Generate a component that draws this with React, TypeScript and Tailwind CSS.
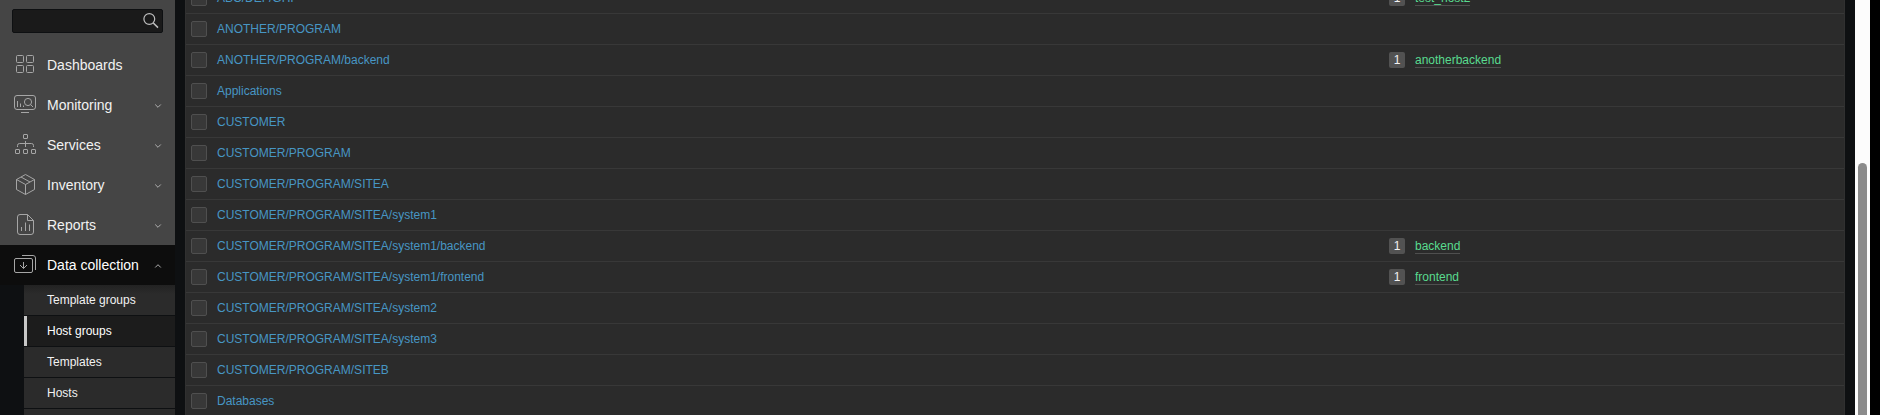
import React from "react";

type Row = { name: string; host?: string };

const rows: Row[] = [
  { name: "ABC/DEF/GHI", host: "test_host2" },
  { name: "ANOTHER/PROGRAM" },
  { name: "ANOTHER/PROGRAM/backend", host: "anotherbackend" },
  { name: "Applications" },
  { name: "CUSTOMER" },
  { name: "CUSTOMER/PROGRAM" },
  { name: "CUSTOMER/PROGRAM/SITEA" },
  { name: "CUSTOMER/PROGRAM/SITEA/system1" },
  { name: "CUSTOMER/PROGRAM/SITEA/system1/backend", host: "backend" },
  { name: "CUSTOMER/PROGRAM/SITEA/system1/frontend", host: "frontend" },
  { name: "CUSTOMER/PROGRAM/SITEA/system2" },
  { name: "CUSTOMER/PROGRAM/SITEA/system3" },
  { name: "CUSTOMER/PROGRAM/SITEB" },
  { name: "Databases" },
];

function Icon({ children }: { children: React.ReactNode }) {
  return (
    <svg width="24" height="24" viewBox="0 0 24 24" fill="none" stroke="#a6a6a6" strokeWidth="1" className="shrink-0">
      {children}
    </svg>
  );
}

const icons = {
  dashboards: (
    <Icon>
      <rect x="3.5" y="2.5" width="7" height="7" rx="1" />
      <rect x="13.5" y="2.5" width="7" height="7" rx="1" />
      <rect x="3.5" y="12.5" width="7" height="7" rx="1" />
      <rect x="13.5" y="12.5" width="7" height="7" rx="1" />
    </Icon>
  ),
  monitoring: (
    <Icon>
      <rect x="1.5" y="2.5" width="21" height="14" rx="2.5" />
      <path d="M8 19.5h8M4.5 8v6M7.5 10.5V14M10.5 12.5V14M17.7 11.7L20 14" />
      <circle cx="15" cy="9" r="3.6" />
    </Icon>
  ),
  services: (
    <Icon>
      <rect x="10.5" y="1.5" width="4" height="4" rx="0.4" />
      <rect x="2.5" y="16.5" width="4" height="4" rx="0.4" />
      <rect x="10.5" y="16.5" width="4" height="4" rx="0.4" />
      <rect x="18.5" y="16.5" width="4" height="4" rx="0.4" />
      <path d="M12.5 8v6M4.500 14v-1.500a2 2 0 0 1 2-2h12a2 2 0 0 1 2 2V14" />
    </Icon>
  ),
  inventory: (
    <Icon>
      <path d="M12.5 1.500l9 5v10l-9 5-9-5v-10zM3.500 6.500l9 5 9-5M12.500 11.500v10M8 4l9 5" />
    </Icon>
  ),
  reports: (
    <Icon>
      <path d="M14.500 1.500H7A2.500 2.500 0 0 0 4.500 4v15A2.500 2.500 0 0 0 7 21.500h11a2.500 2.500 0 0 0 2.500-2.500V7.500zM14.500 1.500v6h6M8.500 14v4M12.500 9.500V18M16.500 11.500V18" />
    </Icon>
  ),
  collection: (
    <Icon>
      <rect x="1.500" y="5.500" width="18" height="14" rx="1.500" />
      <path d="M9 2.500h11A2.500 2.500 0 0 1 22.500 5v12M10.500 9v6.500M7 12l3.500 3.500L14 12" />
    </Icon>
  ),
};

function MenuItem({ label, icon, arrow }: { label: string; icon: React.ReactNode; arrow?: "up" | "down" }) {
  return (
    <a className={`flex h-10 items-center pr-[14px] pl-[13px] text-sm ${arrow === "up" ? "bg-[#0d0d0d] text-white" : "text-[#f2f2f2]"}`}>
      {icon}
      <span className="ml-[10px] flex-1 whitespace-nowrap">{label}</span>
      {arrow && (
        <svg width="6" height="4" viewBox="0 0 6 4" fill="none" stroke="#b0b0b0" className="mt-[2px] shrink-0 overflow-visible">
          <path d={arrow === "up" ? "M.2 3.500L3 .7l2.800 2.800" : "M.2 .5L3 3.300 5.800 .5"} />
        </svg>
      )}
    </a>
  );
}

function Sidebar() {
  return (
    <aside className="flex w-[175px] shrink-0 flex-col bg-[#454545]">
      <div className="flex h-[45px] shrink-0 items-start pt-[9px] pl-3">
        <div className="flex h-6 w-[151px] items-center justify-end rounded-[2px] border border-[#0e1012] bg-[#1a1a1a] pr-[3px]">
          <svg width="16" height="16" viewBox="0 0 16 16" fill="none" stroke="#bfbfbf" strokeWidth="1.2">
            <circle cx="6.3" cy="6" r="5.4" />
            <path d="M10.300 10l4.700 4.600" strokeWidth="1.5" />
          </svg>
        </div>
      </div>
      <nav className="shrink-0">
        <MenuItem label="Dashboards" icon={icons.dashboards} />
        <MenuItem label="Monitoring" icon={icons.monitoring} arrow="down" />
        <MenuItem label="Services" icon={icons.services} arrow="down" />
        <MenuItem label="Inventory" icon={icons.inventory} arrow="down" />
        <MenuItem label="Reports" icon={icons.reports} arrow="down" />
        <MenuItem label="Data collection" icon={icons.collection} arrow="up" />
        <div className="flex flex-col gap-px bg-[#0e1012] pl-6 text-xs text-[#f2f2f2]">
          <a className="flex h-[30px] items-center bg-[#2b2b2b] bg-linear-to-b from-[#222222] to-[#2b2b2b] to-30% pl-[23px]">Template groups</a>
          <a className="flex h-[30px] items-center border-l-3 border-[#c8c8c8] bg-[#1c1c1c] pl-5 text-white">Host groups</a>
          <a className="flex h-[30px] items-center bg-[#2b2b2b] pl-[23px]">Templates</a>
          <a className="flex h-[30px] items-center bg-[#2b2b2b] pl-[23px]">Hosts</a>
          <a className="h-[30px] bg-[#2b2b2b]" />
        </div>
      </nav>
    </aside>
  );
}

function GroupRow({ row }: { row: Row }) {
  return (
    <div className="flex h-[31px] shrink-0 items-center border-b border-[#383838] pl-[5px]">
      <span className="h-4 w-4 shrink-0 rounded-[2px] border border-[#4f4f4f] bg-[#383838]" />
      <a className="ml-[10px] w-[1172px] text-[#4796c4]">{row.name}</a>
      {row.host && (
        <>
          <span className="flex h-4 w-4 items-center justify-center rounded-[2px] bg-[#525252] leading-4 text-[#f2f2f2]">1</span>
          <a className="ml-[10px] h-4 border-b border-[#4f4f4f] leading-4 text-[#59db8f]">{row.host}</a>
        </>
      )}
    </div>
  );
}

export default function App() {
  return (
    <div className="flex h-[415px] w-[1880px] overflow-hidden bg-[#0e1012] font-['Liberation_Sans',Arial,sans-serif] text-xs">
      <Sidebar />
      <main className="flex flex-1 justify-center overflow-hidden">
        <section className="-mt-[17px] flex h-[449px] w-[1660px] flex-col border-x border-[#303030] bg-[#2b2b2b]">
          {rows.map((row) => (
            <GroupRow key={row.name} row={row} />
          ))}
        </section>
      </main>
      <div className="flex w-[15px] shrink-0 justify-center bg-[#fcfcfc] pt-[163px]">
        <div className="w-[9px] rounded-t-full bg-[#8b8b8b]" />
      </div>
      <div className="w-[10px] shrink-0 bg-black" />
    </div>
  );
}
